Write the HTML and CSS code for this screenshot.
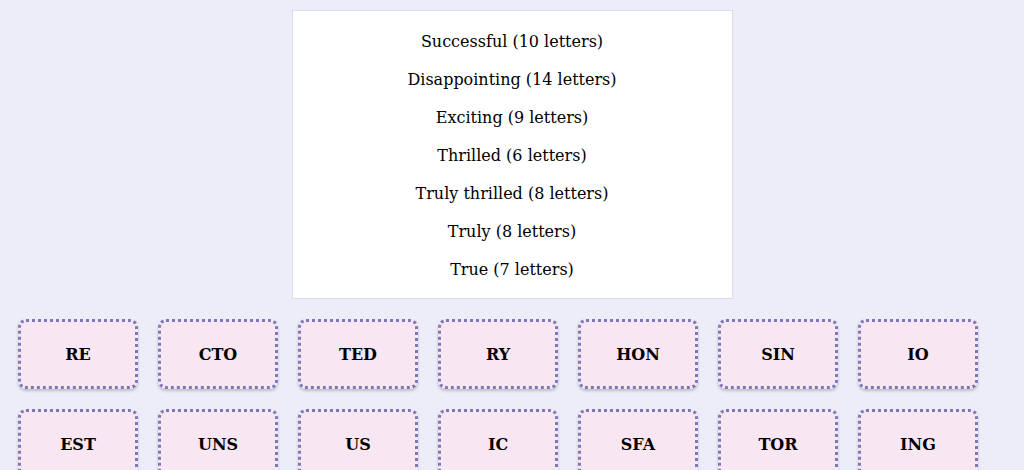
FILE: index.html
```html
<!DOCTYPE html>
<html lang="en">
<head>
    <meta charset="UTF-8">
    <meta name="viewport" content="width=device-width, initial-scale=1.0">
    <title>Word Tiles</title>
    <link rel="stylesheet" href="styles.css">
</head>
<body>
    <div id="clues">
        <div class="clue">Successful (10 letters)</div>
        <div class="clue">Disappointing (14 letters)</div>
        <div class="clue">Exciting (9 letters)</div>
        <div class="clue">Thrilled (6 letters)</div>
        <div class="clue">Truly thrilled (8 letters)</div>
        <div class="clue">Truly (8 letters)</div>
        <div class="clue">True (7 letters)</div>
    </div>

    <div id="tiles">
        <div class="tile">RE</div>
        <div class="tile">CTO</div>
        <div class="tile">TED</div>
        <div class="tile">RY</div>
        <div class="tile">HON</div>
        <div class="tile">SIN</div>
        <div class="tile">IO</div>
        <div class="tile">EST</div>
        <div class="tile">UNS</div>
        <div class="tile">US</div>
        <div class="tile">IC</div>
        <div class="tile">SFA</div>
        <div class="tile">TOR</div>
        <div class="tile">ING</div>
    </div>
</body>
</html>
```

FILE: styles.css
```css
body{
    background-color: #ededf9;
    font-family: "DejaVu Serif", serif;
    font-size: 16px;
    margin: 8px;
}
#clues{
    width: 439px;
    margin: 2px auto 10px auto;
    padding: 12px 0px 9px 0px;
    background-color: white;
    border: 1px solid #dcdce6;
    text-align: center;
}
.clue{
    height: 38px;
    line-height: 38px;
    color: #000;
}
#tiles{
    display: flex;
    flex-wrap: wrap;
}
.tile{
    box-sizing: border-box;
    width: 120px;
    height: 70px;
    margin: 10px;
    padding-top: 1px;
    background-color: #f9e6f3;
    border: 3px dotted #7a7ab8;
    border-radius: 8px;
    box-shadow: 0px 2px 3px rgba(0, 0, 0, 0.2);
    display: flex;
    justify-content: center;
    align-items: center;
    font-weight: bold;
    color: black;
}
```
